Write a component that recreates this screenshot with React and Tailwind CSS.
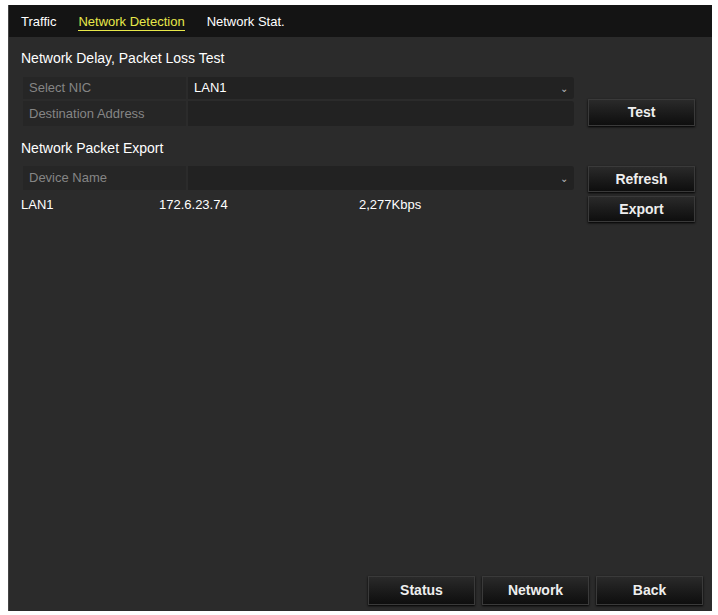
export default function App() {
  const btn = "flex items-center justify-center text-[14px] font-bold text-[#eee] bg-gradient-to-b from-[#2a2a2a] to-[#0e0e0e] border border-[#3a3a3a] shadow-[0_1px_2px_#000]";
  return (
    <div className="w-[718px] h-[615px] bg-white pt-[5px] pl-[8px]" style={{ fontFamily: '"Liberation Sans", Arial, sans-serif' }}>
      <div className="w-[704px] h-[606px] bg-[#2b2b2b] flex flex-col border-l border-[#444]">
        <div className="h-[32px] bg-[#141414] flex items-end gap-[22px] px-[12px] pb-[6px] text-[13px]">
          <span className="text-white">Traffic</span>
          <span className="text-[#e8e84a] border-b border-[#e8e84a] leading-[16px]">Network Detection</span>
          <span className="text-white">Network Stat.</span>
        </div>
        <div className="px-[12px] pt-[11px] text-[14px] text-white">Network Delay, Packet Loss Test</div>
        <div className="flex pl-[14px] pt-[8px] gap-[14px]">
          <div className="w-[551px] flex flex-col gap-[2px]">
            <div className="flex h-[22px] gap-[2px]">
              <div className="w-[163px] bg-[#262626] text-[#858585] text-[13px] px-[6px] flex items-center">Select NIC</div>
              <div className="flex-1 bg-[#222] text-white text-[13px] px-[6px] flex items-center justify-between rounded-r-[3px]">LAN1<span className="text-[10px] text-[#bbb]">⌄</span></div>
            </div>
            <div className="flex h-[25px] gap-[2px]">
              <div className="w-[163px] bg-[#262626] text-[#858585] text-[13px] px-[6px] flex items-center">Destination Address</div>
              <div className="flex-1 bg-[#222] rounded-r-[3px]"></div>
            </div>
          </div>
          <div className="flex flex-col justify-end">
            <div className={btn + " w-[107px] h-[27px]"}>Test</div>
          </div>
        </div>
        <div className="px-[12px] pt-[12px] text-[14px] text-white">Network Packet Export</div>
        <div className="flex pl-[14px] pt-[7px] gap-[14px]">
          <div className="w-[551px] flex flex-col">
            <div className="flex h-[24px] gap-[2px]">
              <div className="w-[163px] bg-[#262626] text-[#858585] text-[13px] px-[6px] flex items-center">Device Name</div>
              <div className="flex-1 bg-[#222] text-white text-[13px] px-[6px] flex items-center justify-end rounded-r-[3px]"><span className="text-[10px] text-[#bbb]">⌄</span></div>
            </div>
            <div className="flex h-[30px] items-center text-[13px] text-white -ml-[2px]">
              <span className="w-[138px]">LAN1</span>
              <span className="w-[200px]">172.6.23.74</span>
              <span>2,277Kbps</span>
            </div>
          </div>
          <div className="flex flex-col gap-[4px]">
            <div className={btn + " w-[107px] h-[26px]"}>Refresh</div>
            <div className={btn + " w-[107px] h-[26px]"}>Export</div>
          </div>
        </div>
        <div className="flex-1"></div>
        <div className="flex justify-end gap-[7px] pr-[9px] pb-[6px]">
          <div className={btn + " w-[107px] h-[29px]"}>Status</div>
          <div className={btn + " w-[107px] h-[29px]"}>Network</div>
          <div className={btn + " w-[107px] h-[29px]"}>Back</div>
        </div>
      </div>
    </div>
  );
}
